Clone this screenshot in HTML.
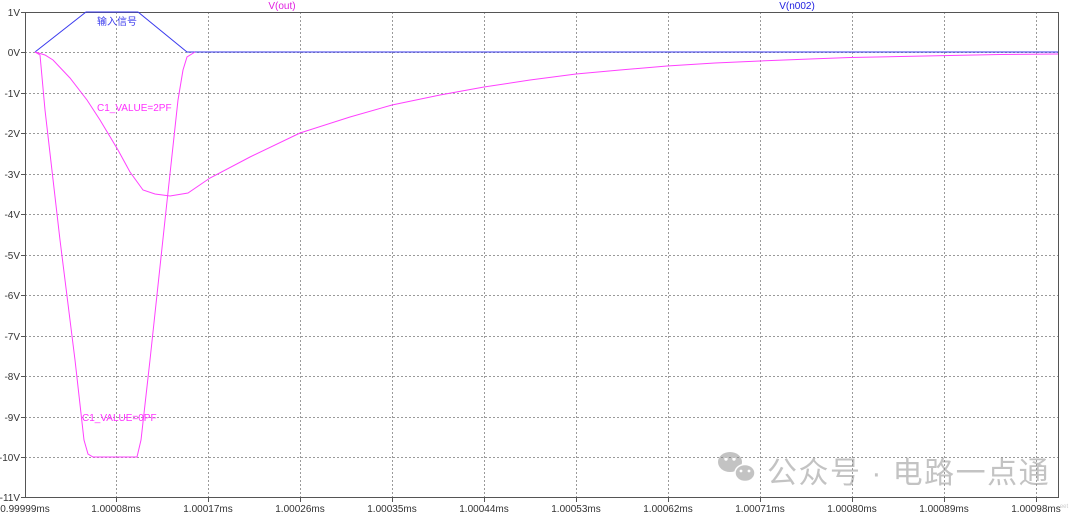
<!DOCTYPE html>
<html><head><meta charset="utf-8"><style>
html,body{margin:0;padding:0;background:#fff;width:1080px;height:515px;overflow:hidden}
svg text{font-family:"Liberation Sans","Noto Sans CJK SC",sans-serif}
</style></head><body>
<svg width="1080" height="515" viewBox="0 0 1080 515" xmlns="http://www.w3.org/2000/svg">
<rect width="1080" height="515" fill="#fff"/>
<g stroke="#9a9a9a" stroke-width="1" stroke-dasharray="2,2" shape-rendering="crispEdges">
<line x1="25" y1="52.5" x2="1058" y2="52.5"/>
<line x1="25" y1="93.5" x2="1058" y2="93.5"/>
<line x1="25" y1="133.5" x2="1058" y2="133.5"/>
<line x1="25" y1="174.5" x2="1058" y2="174.5"/>
<line x1="25" y1="214.5" x2="1058" y2="214.5"/>
<line x1="25" y1="255.5" x2="1058" y2="255.5"/>
<line x1="25" y1="295.5" x2="1058" y2="295.5"/>
<line x1="25" y1="336.5" x2="1058" y2="336.5"/>
<line x1="25" y1="376.5" x2="1058" y2="376.5"/>
<line x1="25" y1="417.5" x2="1058" y2="417.5"/>
<line x1="25" y1="457.5" x2="1058" y2="457.5"/>
<line x1="116.5" y1="12" x2="116.5" y2="498"/>
<line x1="208.5" y1="12" x2="208.5" y2="498"/>
<line x1="300.5" y1="12" x2="300.5" y2="498"/>
<line x1="392.5" y1="12" x2="392.5" y2="498"/>
<line x1="484.5" y1="12" x2="484.5" y2="498"/>
<line x1="576.5" y1="12" x2="576.5" y2="498"/>
<line x1="668.5" y1="12" x2="668.5" y2="498"/>
<line x1="760.5" y1="12" x2="760.5" y2="498"/>
<line x1="852.5" y1="12" x2="852.5" y2="498"/>
<line x1="944.5" y1="12" x2="944.5" y2="498"/>
<line x1="1036.5" y1="12" x2="1036.5" y2="498"/>
</g>
<rect x="25.5" y="12.5" width="1033" height="485" fill="none" stroke="#555" stroke-width="1" shape-rendering="crispEdges"/>
<g stroke="#555" shape-rendering="crispEdges">
<line x1="21" y1="12.5" x2="25" y2="12.5"/><line x1="21" y1="52.5" x2="25" y2="52.5"/><line x1="21" y1="93.5" x2="25" y2="93.5"/><line x1="21" y1="133.5" x2="25" y2="133.5"/><line x1="21" y1="174.5" x2="25" y2="174.5"/><line x1="21" y1="214.5" x2="25" y2="214.5"/><line x1="21" y1="255.5" x2="25" y2="255.5"/><line x1="21" y1="295.5" x2="25" y2="295.5"/><line x1="21" y1="336.5" x2="25" y2="336.5"/><line x1="21" y1="376.5" x2="25" y2="376.5"/><line x1="21" y1="417.5" x2="25" y2="417.5"/><line x1="21" y1="457.5" x2="25" y2="457.5"/><line x1="21" y1="497.5" x2="25" y2="497.5"/>
<line x1="116.5" y1="498" x2="116.5" y2="502"/><line x1="208.5" y1="498" x2="208.5" y2="502"/><line x1="300.5" y1="498" x2="300.5" y2="502"/><line x1="392.5" y1="498" x2="392.5" y2="502"/><line x1="484.5" y1="498" x2="484.5" y2="502"/><line x1="576.5" y1="498" x2="576.5" y2="502"/><line x1="668.5" y1="498" x2="668.5" y2="502"/><line x1="760.5" y1="498" x2="760.5" y2="502"/><line x1="852.5" y1="498" x2="852.5" y2="502"/><line x1="944.5" y1="498" x2="944.5" y2="502"/><line x1="1036.5" y1="498" x2="1036.5" y2="502"/>
</g>
<g font-size="10" fill="#333" text-anchor="end">
<text x="20" y="16">1V</text><text x="20" y="56">0V</text><text x="20" y="97">-1V</text><text x="20" y="137">-2V</text><text x="20" y="178">-3V</text><text x="20" y="218">-4V</text><text x="20" y="259">-5V</text><text x="20" y="299">-6V</text><text x="20" y="340">-7V</text><text x="20" y="380">-8V</text><text x="20" y="421">-9V</text><text x="20" y="461">-10V</text><text x="20" y="501">-11V</text>
</g>
<g font-size="10" fill="#333" text-anchor="middle">
<text x="25" y="512">0.99999ms</text><text x="116" y="512">1.00008ms</text><text x="208" y="512">1.00017ms</text><text x="300" y="512">1.00026ms</text><text x="392" y="512">1.00035ms</text><text x="484" y="512">1.00044ms</text><text x="576" y="512">1.00053ms</text><text x="668" y="512">1.00062ms</text><text x="760" y="512">1.00071ms</text><text x="852" y="512">1.00080ms</text><text x="944" y="512">1.00089ms</text><text x="1036" y="512">1.00098ms</text>
</g>
<text x="282" y="9" font-size="10" fill="#e020e0" text-anchor="middle">V(out)</text>
<text x="797" y="9" font-size="10" fill="#2020e0" text-anchor="middle">V(n002)</text>
<polyline fill="none" stroke="#3a3aee" stroke-width="1" points="35,52 86,12 138,12 187,52 1058,52"/>
<polyline fill="none" stroke="#ff40ff" stroke-width="1" points="35,52 40,55 45,110 60,240 75,360 84,440 88,454 93,457 137,457 141,440 150,360 165,220 178,100 183,70 187,57 195,52"/>
<polyline fill="none" stroke="#ff40ff" stroke-width="1" points="35,52 45,55 53,60 70,78 87,100 100,120 118,150 130,172 143,190 155,194 170,196 188,193 210,178 250,157 300,133 350,117 392,105 440,95 484,87 530,80 576,74 620,70 667,66 715,63 760,61 810,59 850,57.5 900,56.5 950,55.5 1000,54.5 1058,54"/>
<text x="97" y="25" font-size="10" fill="#3a3aee">输入信号</text>
<text x="97" y="111" font-size="10" fill="#ff30ff">C1_VALUE=2PF</text>
<text x="82" y="421" font-size="10" fill="#ff30ff">C1_VALUE=0PF</text>
<g opacity="0.5">
<ellipse cx="730" cy="462" rx="12" ry="10" fill="#888"/>
<ellipse cx="745" cy="473" rx="10" ry="8.5" fill="#888" stroke="#fff" stroke-width="1.5"/>
<circle cx="726" cy="459" r="1.7" fill="#fff"/><circle cx="734" cy="459" r="1.7" fill="#fff"/>
<circle cx="741" cy="471" r="1.4" fill="#fff"/><circle cx="749" cy="471" r="1.4" fill="#fff"/>
<text x="767" y="483" font-size="30" letter-spacing="1.5" fill="#888">公众号 · 电路一点通</text>
</g>
<text x="1064" y="508" font-size="6" fill="#ccc" text-anchor="middle">eet</text>
</svg>
</body></html>
